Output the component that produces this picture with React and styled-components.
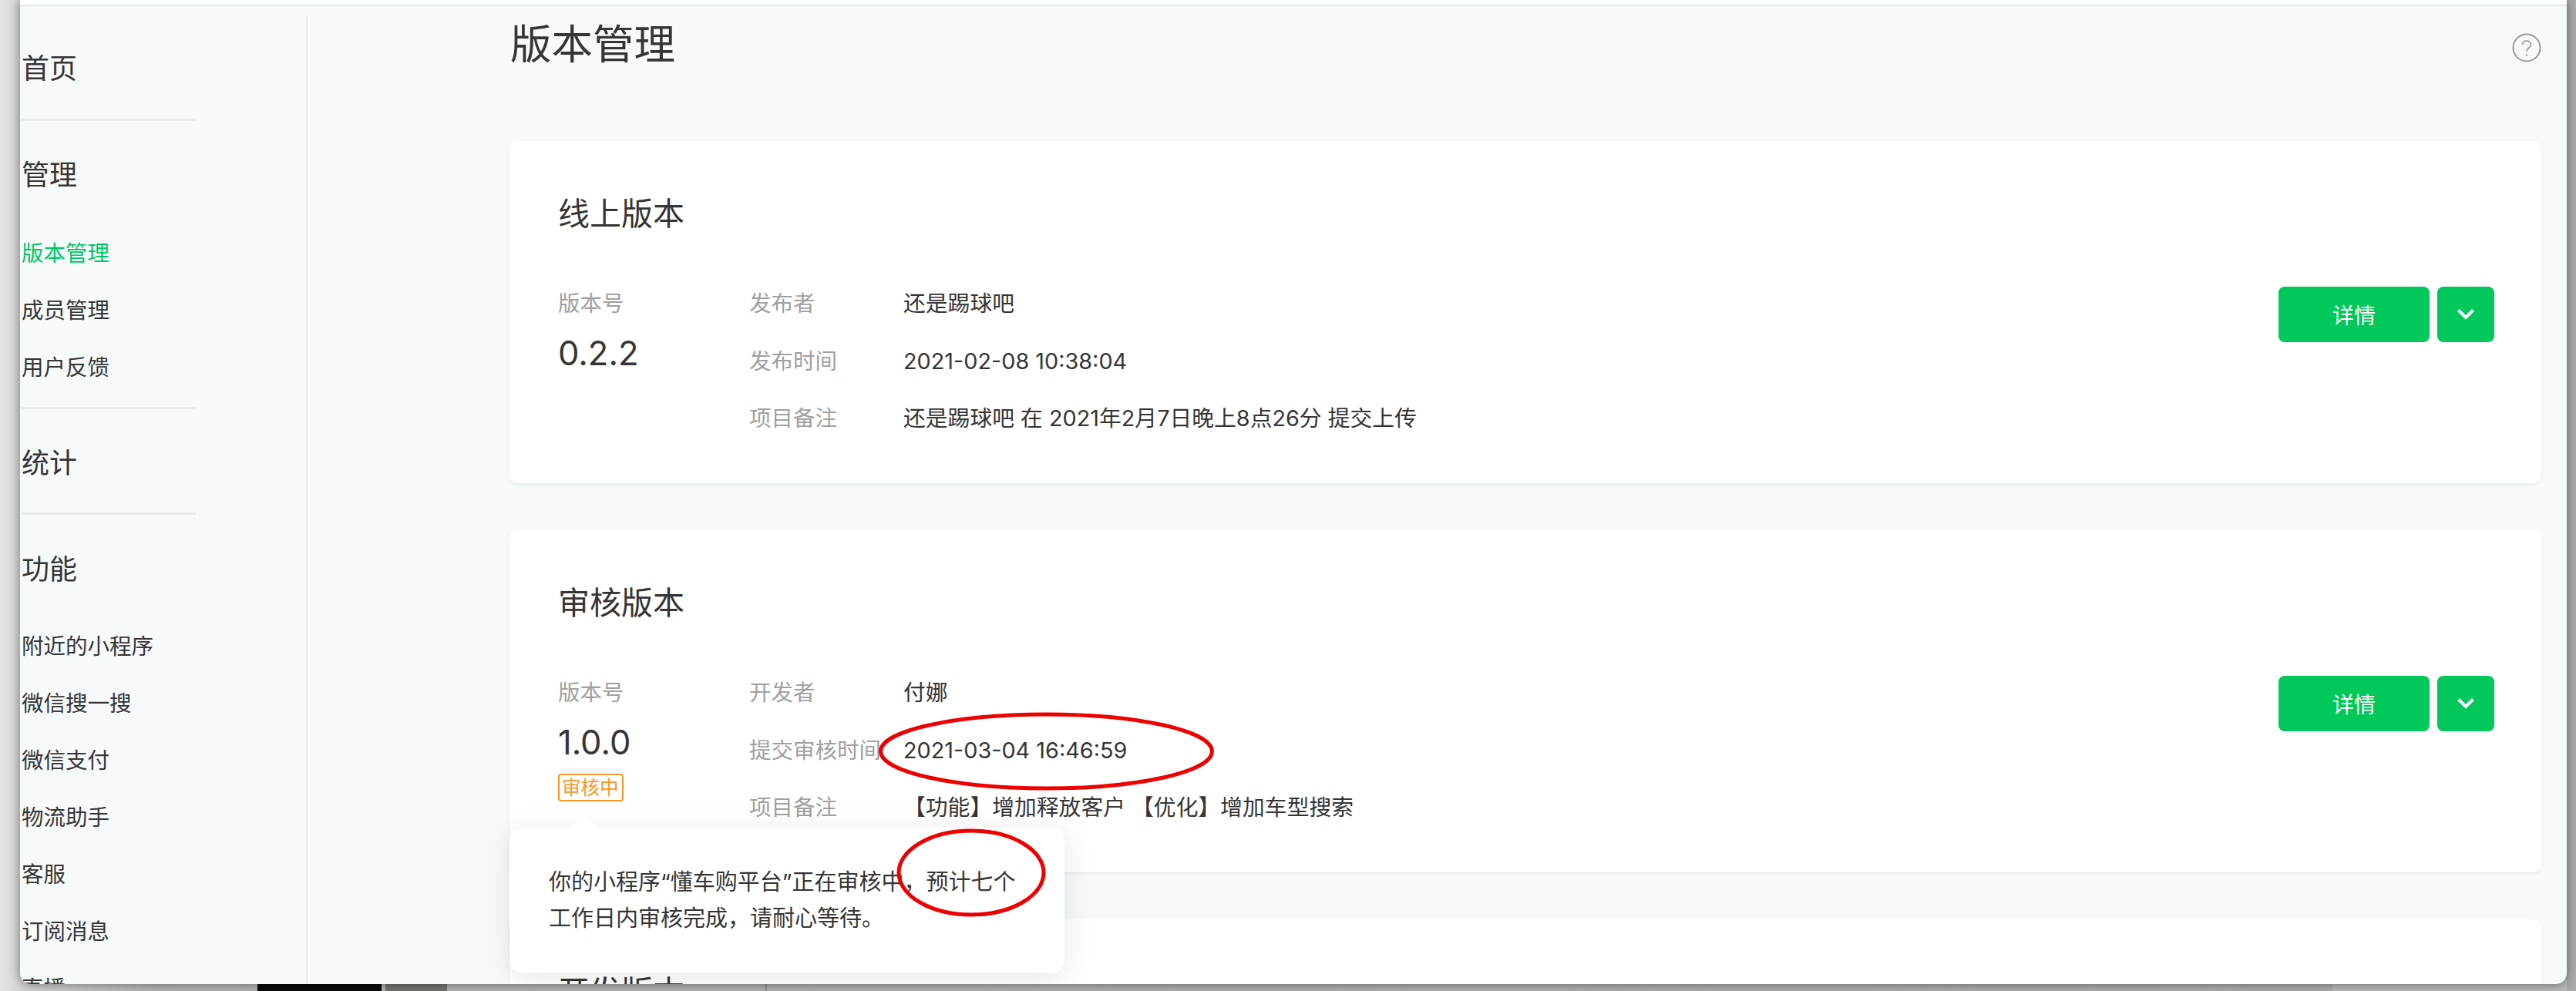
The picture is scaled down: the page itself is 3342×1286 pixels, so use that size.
import React from 'react';
import styled, { createGlobalStyle } from 'styled-components';

const Global = createGlobalStyle`
  html, body { margin: 0; padding: 0; }
  body { font-family: "Inter", "Noto Sans CJK SC", sans-serif; color: #353535; }
  * { box-sizing: border-box; }
`;

const Desktop = styled.div`
  position: relative;
  width: 3342px;
  height: 1286px;
  overflow: hidden;
  padding: 0 12px 9px 26px;
  background: linear-gradient(to right, #e4e4e4 0, #d4d4d4 26px, #b4b4b4 200px, #ababab 100%);
`;
const DesktopPiece = styled.div`
  position: absolute;
  top: 1270px;
  bottom: 0;
  left: ${p => p.$left}px;
  width: ${p => p.$width}px;
  background: ${p => p.$bg};
`;
const Win = styled.div`
  position: relative;
  z-index: 1;
  height: 100%;
  display: flex;
  flex-direction: column;
  overflow: hidden;
  border-radius: 0 0 14px 14px;
  background: #f6fafa;
  box-shadow: 0 0 14px rgba(0, 0, 0, 0.45);
`;
const TopStrip = styled.div`
  flex: none;
  height: 8px;
  background: #fff;
  border-bottom: 2px solid #e2e4e6;
`;
const Body = styled.div`
  flex: 1;
  min-height: 0;
  display: flex;
`;
const Sidebar = styled.nav`
  flex: none;
  width: 373px;
  margin-top: 12px;
  padding: 33px 0 0 2px;
  border-right: 2px solid #e6eaea;
  overflow: hidden;
`;
const NavHeading = styled.div`
  height: 72px;
  line-height: 72px;
  font-size: 36px;
  margin-top: ${p => p.$top || 0}px;
`;
const NavRule = styled.div`
  width: 226px;
  height: 3px;
  background: #e8ecee;
  margin-top: ${p => p.$top}px;
`;
const NavList = styled.div`
  margin-top: ${p => p.$top}px;
`;
const NavItem = styled.div`
  height: 74px;
  line-height: 74px;
  font-size: 28.5px;
  white-space: nowrap;
  color: ${p => (p.$active ? '#00c764' : '#353535')};
`;
const Main = styled.main`
  position: relative;
  flex: 1;
  min-width: 0;
  padding: 14px 33px 0 262px;
  overflow: hidden;
`;
const PageHead = styled.header`
  display: flex;
  justify-content: space-between;
  align-items: center;
  height: 72px;
  margin-bottom: 89px;
`;
const PageTitle = styled.h1`
  margin: 0 0 0 1px;
  font-size: 53.5px;
  font-weight: 400;
  line-height: 72px;
`;
const HelpIcon = styled.svg`
  width: 38px;
  height: 38px;
  margin-top: 8px;
`;
const Card = styled.section`
  position: relative;
  height: 444px;
  margin-bottom: 61px;
  padding: 64px 61px 0 63px;
  background: #fff;
  border-radius: 10px;
  box-shadow: 0 2px 5px rgba(0, 0, 0, 0.07);
`;
const CardTitle = styled.h2`
  margin: 0 0 50px;
  height: 60px;
  line-height: 60px;
  font-size: 41px;
  font-weight: 400;
`;
const CardBody = styled.div`
  display: flex;
  align-items: flex-start;
`;
const VersionCol = styled.div`
  flex: none;
  width: 248px;
`;
const Label = styled.div`
  height: 74px;
  line-height: 74px;
  font-size: 28.5px;
  color: #a0a0a0;
  white-space: nowrap;
`;
const VersionNumber = styled.div`
  height: 54px;
  line-height: 54px;
  font-size: 43.5px;
`;
const Badge = styled.span`
  display: inline-block;
  margin-top: 14px;
  height: 36px;
  line-height: 32px;
  padding: 0 4px 0 3px;
  border: 2px solid #f8962a;
  border-radius: 4px;
  font-size: 24.5px;
  color: #f8962a;
`;
const Details = styled.dl`
  flex: 1;
  margin: 0;
  display: grid;
  grid-template-columns: 200px 1fr;
  grid-auto-rows: 74.5px;
`;
const Value = styled.dd`
  margin: 0;
  line-height: 74px;
  font-size: 28.8px;
  white-space: nowrap;
`;
const Term = styled(Label).attrs({ as: 'dt' })``;
const Actions = styled.div`
  flex: none;
  display: flex;
  gap: 10px;
  margin-top: 15px;
`;
const Button = styled.button`
  flex: none;
  display: flex;
  align-items: center;
  justify-content: center;
  width: ${p => p.$width}px;
  height: 72px;
  padding: 0;
  border: 0;
  border-radius: 8px;
  background: #00c85a;
  color: #fff;
  font: 400 28px "Noto Sans CJK SC", sans-serif;
`;
const Popover = styled.div`
  position: absolute;
  left: 0;
  top: 386px;
  z-index: 2;
  width: 720px;
  height: 188px;
  padding: 47px 0 0 51px;
  background: #fff;
  border-radius: 16px;
  box-shadow: 0 6px 40px rgba(0, 0, 0, 0.1);
  font-size: 29px;
  line-height: 47px;
  white-space: nowrap;
  &::before {
    content: "";
    position: absolute;
    left: 84px;
    top: -12px;
    width: 26px;
    height: 26px;
    background: #fff;
    transform: rotate(45deg);
  }
`;
const Annotation = styled.svg`
  position: absolute;
  z-index: 3;
  left: ${p => p.$left}px;
  top: ${p => p.$top}px;
  overflow: visible;
`;

const Chevron = () => (
  <svg width="24" height="16" viewBox="0 0 24 16" fill="none">
    <path d="M2.5 2.5 L12 12 L21.5 2.5" stroke="#fff" strokeWidth="4" />
  </svg>
);

const VersionCard = ({ title, version, badge, rows, children }) => (
  <Card>
    <CardTitle>{title}</CardTitle>
    <CardBody>
      <VersionCol>
        <Label>版本号</Label>
        <VersionNumber>{version}</VersionNumber>
        {badge && <Badge>{badge}</Badge>}
      </VersionCol>
      <Details>
        {rows.map(([k, v]) => (
          <React.Fragment key={k}>
            <Term>{k}</Term>
            <Value>{v}</Value>
          </React.Fragment>
        ))}
      </Details>
      <Actions>
        <Button $width={196}>详情</Button>
        <Button $width={74}><Chevron /></Button>
      </Actions>
    </CardBody>
    {children}
  </Card>
);

export default function App() {
  return (
    <Desktop>
      <Global />
      <DesktopPiece $left={334} $width={161} $bg="#0c0c0c" />
      <DesktopPiece $left={500} $width={80} $bg="#77746f" />
      <DesktopPiece $left={993} $width={2} $bg="#8f8f8f" />
      <DesktopPiece $left={3026} $width={304} $bg="#b9b9b9" />
      <Win>
        <TopStrip />
        <Body>
          <Sidebar>
            <NavHeading>首页</NavHeading>
            <NavRule $top={29} />
            <NavHeading $top={34}>管理</NavHeading>
            <NavList $top={29}>
              <NavItem $active>版本管理</NavItem>
              <NavItem>成员管理</NavItem>
              <NavItem>用户反馈</NavItem>
            </NavList>
            <NavRule $top={14} />
            <NavHeading $top={34}>统计</NavHeading>
            <NavRule $top={28} />
            <NavHeading $top={35}>功能</NavHeading>
            <NavList $top={27}>
              <NavItem>附近的小程序</NavItem>
              <NavItem>微信搜一搜</NavItem>
              <NavItem>微信支付</NavItem>
              <NavItem>物流助手</NavItem>
              <NavItem>客服</NavItem>
              <NavItem>订阅消息</NavItem>
              <NavItem>直播</NavItem>
            </NavList>
          </Sidebar>
          <Main>
            <PageHead>
              <PageTitle>版本管理</PageTitle>
              <HelpIcon viewBox="0 0 38 38" fill="none" stroke="#999" strokeWidth="2">
                <circle cx="19" cy="19" r="17.5" />
                <path d="M13.5 15 C13.5 8.5 24.5 8.5 24.5 15 C24.5 19 19 19 19 24" strokeWidth="1.8" />
                <circle cx="19" cy="28.5" r="1.3" fill="#999" stroke="none" />
              </HelpIcon>
            </PageHead>
            <VersionCard
              title="线上版本"
              version="0.2.2"
              rows={[
                ['发布者', '还是踢球吧'],
                ['发布时间', '2021-02-08 10:38:04'],
                ['项目备注', '还是踢球吧 在 2021年2月7日晚上8点26分 提交上传'],
              ]}
            />
            <VersionCard
              title="审核版本"
              version="1.0.0"
              badge="审核中"
              rows={[
                ['开发者', '付娜'],
                ['提交审核时间', '2021-03-04 16:46:59'],
                ['项目备注', '【功能】增加释放客户 【优化】增加车型搜索'],
              ]}
            >
              <Popover>
                你的小程序“懂车购平台”正在审核中，预计七个
                <br />
                工作日内审核完成，请耐心等待。
              </Popover>
            </VersionCard>
            <Card>
              <CardTitle>开发版本</CardTitle>
            </Card>
            <Annotation $left={741} $top={917} width="435" height="100" viewBox="0 0 435 100" fill="none">
              <ellipse cx="217.5" cy="50" rx="215" ry="48" stroke="#ee0000" strokeWidth="5" />
            </Annotation>
            <Annotation $left={765} $top={1068} width="192" height="113" viewBox="0 0 192 113" fill="none">
              <ellipse cx="96" cy="56.5" rx="94" ry="54.5" stroke="#ee0000" strokeWidth="5" />
            </Annotation>
          </Main>
        </Body>
      </Win>
    </Desktop>
  );
}
